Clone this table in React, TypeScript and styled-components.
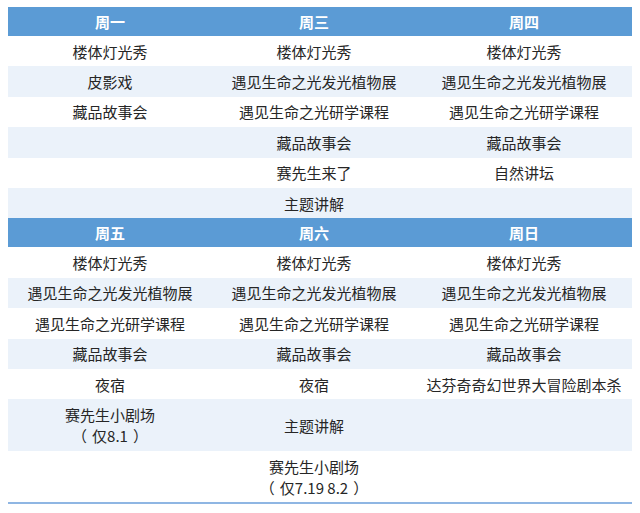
import React from "react";
import styled, { createGlobalStyle } from "styled-components";

const Global = createGlobalStyle`
  html, body { margin: 0; padding: 0; background: #ffffff; }
  body { font-family: "Noto Sans CJK SC", "Noto Sans", sans-serif; }
`;

const Page = styled.div`
  padding: 7px 8px 0 8px;
  width: 640px;
  box-sizing: border-box;
`;

const Table = styled.div`
  display: grid;
  grid-template-columns: 204px 204px 1fr;
  border-bottom: 2px solid #8fb6e3;
`;

const HeadCell = styled.div`
  background: #5b9bd5;
  color: #ffffff;
  font-weight: 700;
  font-size: 15px;
  height: 29px;
  display: flex;
  align-items: center;
  justify-content: center;
`;

const Cell = styled.div<{ $shade: boolean; $tall?: boolean }>`
  background: ${(p) => (p.$shade ? "#ebf2fa" : "#ffffff")};
  color: #262626;
  font-size: 15px;
  line-height: 21px;
  height: ${(p) => (p.$tall ? "51.5px" : "30.4px")};
  display: flex;
  flex-direction: column;
  align-items: center;
  justify-content: center;
  text-align: center;
  white-space: nowrap;
`;

const Note = styled.span`
  display: inline-flex;
  align-items: baseline;
`;

const Paren = styled.span<{ $open?: boolean }>`
  display: inline-block;
  ${(p) => (p.$open ? "margin-right: 5px;" : "margin-left: 5px;")}
`;

type Line = { text: string; note?: boolean };
type Row = { cells: Line[][]; tall?: boolean };

const t = (s: string): Line[] => [{ text: s }];

const week1: { head: string[]; rows: Row[] } = {
  head: ["周一", "周三", "周四"],
  rows: [
    { cells: [t("楼体灯光秀"), t("楼体灯光秀"), t("楼体灯光秀")] },
    { cells: [t("皮影戏"), t("遇见生命之光发光植物展"), t("遇见生命之光发光植物展")] },
    { cells: [t("藏品故事会"), t("遇见生命之光研学课程"), t("遇见生命之光研学课程")] },
    { cells: [[], t("藏品故事会"), t("藏品故事会")] },
    { cells: [[], t("赛先生来了"), t("自然讲坛")] },
    { cells: [[], t("主题讲解"), []] },
  ],
};

const week2: { head: string[]; rows: Row[] } = {
  head: ["周五", "周六", "周日"],
  rows: [
    { cells: [t("楼体灯光秀"), t("楼体灯光秀"), t("楼体灯光秀")] },
    { cells: [t("遇见生命之光发光植物展"), t("遇见生命之光发光植物展"), t("遇见生命之光发光植物展")] },
    { cells: [t("遇见生命之光研学课程"), t("遇见生命之光研学课程"), t("遇见生命之光研学课程")] },
    { cells: [t("藏品故事会"), t("藏品故事会"), t("藏品故事会")] },
    { cells: [t("夜宿"), t("夜宿"), t("达芬奇奇幻世界大冒险剧本杀")] },
    {
      cells: [[{ text: "赛先生小剧场" }, { text: "仅8.1", note: true }], t("主题讲解"), []],
      tall: true,
    },
    {
      cells: [[], [{ text: "赛先生小剧场" }, { text: "仅7.19 8.2", note: true }], []],
      tall: true,
    },
  ],
};

const Section: React.FC<{ data: { head: string[]; rows: Row[] } }> = ({ data }) => (
  <>
    {data.head.map((h) => (
      <HeadCell key={h}>{h}</HeadCell>
    ))}
    {data.rows.map((r, i) =>
      r.cells.map((lines, j) => (
        <Cell key={`${data.head[0]}-${i}-${j}`} $shade={i % 2 === 1} $tall={r.tall}>
          {lines.map((l) =>
            l.note ? (
              <Note key={l.text}>
                <Paren $open>（</Paren>
                {l.text}
                <Paren>）</Paren>
              </Note>
            ) : (
              <span key={l.text}>{l.text}</span>
            )
          )}
        </Cell>
      ))
    )}
  </>
);

export default function App() {
  return (
    <>
      <Global />
      <Page>
        <Table>
          <Section data={week1} />
          <Section data={week2} />
        </Table>
      </Page>
    </>
  );
}
